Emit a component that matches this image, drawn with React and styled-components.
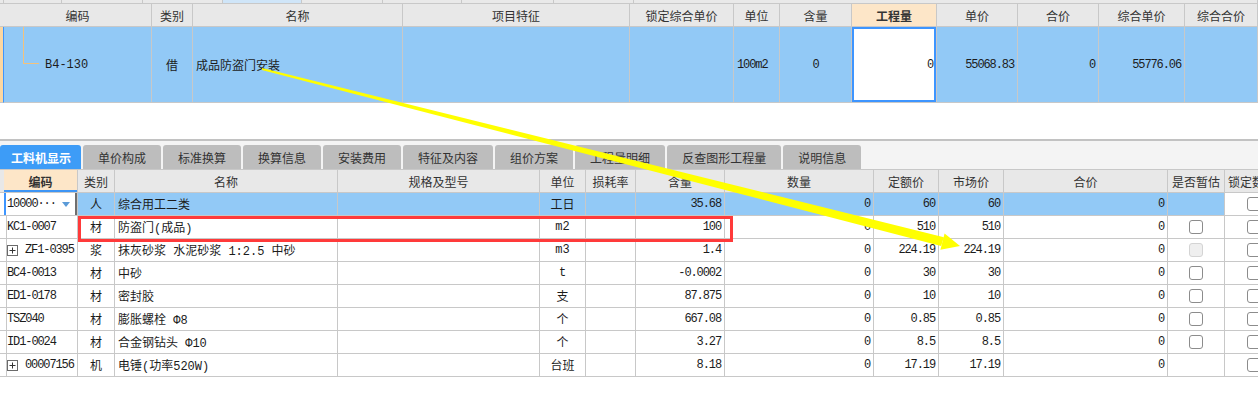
import React from "react";
import styled, { createGlobalStyle } from "styled-components";

const GlobalStyle = createGlobalStyle`
  body {
    margin: 0;
    background: #fff;
    font-family: "Noto Sans CJK SC", sans-serif;
  }
`;

const CJK = `"Noto Sans CJK SC", sans-serif`;
const MIXED = `"Liberation Mono", "Noto Sans CJK SC", monospace`;

const Page = styled.div`
  position: relative;
  width: 1258px;
  height: 420px;
  overflow: hidden;
  background: #fff;
`;

const Strip = styled.div`
  display: flex;
  height: 4px;
  box-sizing: border-box;
  border-bottom: 1px solid #c8c8c8;
`;
const StripCell = styled.div`
  box-sizing: border-box;
  width: ${p => p.$w}px;
  flex: ${p => (p.$w ? "none" : "1")};
  border-right: 1px solid #c8c8c8;
  background: ${p => (p.$hl ? "#cfe5f8" : "#e9e9e9")};
`;

const Grid = styled.div`
  display: grid;
  grid-template-columns: ${p => p.$cols.map(c => `${c}px`).join(" ")};
  grid-template-rows: ${p => p.$rows};
  width: max-content;
`;

const Cell = styled.div`
  position: relative;
  box-sizing: border-box;
  display: flex;
  align-items: center;
  justify-content: ${p =>
    p.$align === "right" ? "flex-end" : p.$align === "center" ? "center" : "flex-start"};
  padding: 0 3px;
  border-right: 1px solid #c8c8c8;
  border-bottom: 1px solid #c8c8c8;
  background: ${p => p.$bg || "transparent"};
  color: #1c1c1c;
  font-family: ${MIXED};
  font-size: 12px;
  letter-spacing: ${p => (p.$num ? "-1.1px" : "normal")};
  white-space: nowrap;
  overflow: hidden;
`;

const HeadCell = styled(Cell)`
  justify-content: ${p => (p.$left ? "flex-start" : "center")};
  background: ${p => (p.$active ? "#fde6c8" : "#e8e8e8")};
  font-family: ${CJK};
  font-weight: ${p => (p.$active ? 700 : 400)};
  color: #333;
  box-shadow: ${p => (p.$underline ? "inset 0 -2px 0 #3d95f5" : "none")};
`;

const EditCell = styled(Cell)`
  background: ${p => (p.$editor ? "#fff" : "transparent")};
  box-shadow: ${p => (p.$editor ? "inset 2px 0 0 #3d95ff, inset -2px 0 0 #6f6f6f" : "none")};
`;

const QtyCell = styled(Cell)`
  background: #fff;
  box-shadow: inset 0 0 0 2px #3d95ff;
`;

const TreeLine = styled.span`
  align-self: flex-start;
  flex: none;
  width: 16px;
  height: 37px;
  margin-left: 16px;
  box-sizing: border-box;
  border-left: 1px solid #f3c27c;
  border-bottom: 1px solid #f3c27c;
`;

const CodeText = styled.span`
  margin-left: ${p => p.$gap || 0}px;
`;

const DropArrow = styled.span`
  margin-left: auto;
  margin-right: 4px;
  width: 0;
  height: 0;
  border-left: 4px solid transparent;
  border-right: 4px solid transparent;
  border-top: 5px solid #5b9bd8;
`;

const ExpandBox = styled.svg`
  flex: none;
  width: 11px;
  height: 11px;
  margin-right: 7px;
`;

const Check = styled.span`
  width: 14px;
  height: 14px;
  box-sizing: border-box;
  border-radius: 3px;
  border: 1px solid ${p => (p.$disabled ? "#d4d4d4" : "#8c8c8c")};
  background: ${p => (p.$disabled ? "#efefef" : "#fff")};
  margin-left: ${p => p.$shift || 0}px;
`;

const TabBar = styled.div`
  display: flex;
  align-items: flex-end;
  gap: 2px;
  height: 31px;
  margin-top: 36px;
  box-sizing: border-box;
  border-top: 2px solid #c2c2c2;
  border-bottom: 1px solid #c8c8c8;
  background: #f4f4f4;
`;

const Tab = styled.div`
  height: 24px;
  display: flex;
  align-items: center;
  padding: ${p => (p.$active ? "0 10px 0 11px" : "0 15px")};
  border-radius: 3px 3px 0 0;
  background: ${p => (p.$active ? "#3d9cf7" : "#bdbdbd")};
  color: ${p => (p.$active ? "#fff" : "#333")};
  font-family: ${CJK};
  font-size: 12px;
  font-weight: ${p => (p.$active ? 700 : 400)};
`;

const Overlay = styled.svg`
  position: absolute;
  left: 0;
  top: 0;
  pointer-events: none;
`;

const RedFrame = styled.div`
  position: absolute;
  left: 78px;
  top: 216px;
  width: 655px;
  height: 26px;
  box-sizing: border-box;
  border: 3px solid #ff3a3a;
`;

const SEL = "#92c9f6";

const stripCols = [4, 58, 81, 80, 79, 81, 79, 92, 80, 0];
const topCols = [4, 148, 41, 210, 227, 104, 46, 72, 85, 81, 81, 86, 73];
const topHeads = ["", "编码", "类别", "名称", "项目特征", "锁定综合单价", "单位", "含量", "工程量", "单价", "合价", "综合单价", "综合合价"];

const botCols = [4, 74, 37, 223, 202, 46, 50, 89, 149, 65, 65, 164, 57, 58];
const botHeads = ["", "编码", "类别", "名称", "规格及型号", "单位", "损耗率", "含量", "数量", "定额价", "市场价", "合价", "是否暂估", "锁定数量"];

const tabs = ["工料机显示", "单价构成", "标准换算", "换算信息", "安装费用", "特征及内容", "组价方案", "工程量明细", "反查图形工程量", "说明信息"];

const rows = [
  { code: "10000···", editor: true, type: "人", name: "综合用工二类", unit: "工日", qty: "35.68", quota: "60", market: "60", est: null, sel: true },
  { code: "KC1-0007", type: "材", name: "防盗门(成品)", unit: "m2", qty: "100", quota: "510", market: "510", est: "on" },
  { code: "ZF1-0395", expand: true, type: "浆", name: "抹灰砂浆 水泥砂浆 1:2.5 中砂", unit: "m3", qty: "1.4", quota: "224.19", market: "224.19", est: "off" },
  { code: "BC4-0013", type: "材", name: "中砂", unit: "t", qty: "-0.0002", quota: "30", market: "30", est: "on" },
  { code: "ED1-0178", type: "材", name: "密封胶", unit: "支", qty: "87.875", quota: "10", market: "10", est: "on" },
  { code: "TSZ040", type: "材", name: "膨胀螺栓 Φ8", unit: "个", qty: "667.08", quota: "0.85", market: "0.85", est: "on" },
  { code: "ID1-0024", type: "材", name: "合金钢钻头 Φ10", unit: "个", qty: "3.27", quota: "8.5", market: "8.5", est: "on" },
  { code: "00007156", expand: true, type: "机", name: "电锤(功率520W)", unit: "台班", qty: "8.18", quota: "17.19", market: "17.19", est: null },
];

const PlusIcon = () => (
  <ExpandBox viewBox="0 0 11 11">
    <rect x="0.5" y="0.5" width="10" height="10" fill="#fff" stroke="#6a6a6a" />
    <path d="M2.5 5.5h6M5.5 2.5v6" stroke="#333" strokeWidth="1" />
  </ExpandBox>
);

const TopTable = () => (
  <>
    <Strip>
      {stripCols.map((w, i) => (
        <StripCell key={i} $w={w} $hl={i === 4} />
      ))}
    </Strip>
    <Grid $cols={topCols} $rows="23px 76px">
      {topHeads.map((h, i) => (
        <HeadCell key={h + i} $active={i === 8}>{h}</HeadCell>
      ))}
      <Cell $bg="#fbd7a2" style={{ borderRight: "1px solid #3d95ff", padding: 0 }} />
      <Cell $bg={SEL}>
        <TreeLine />
        <CodeText $gap={6}>B4-130</CodeText>
      </Cell>
      <Cell $bg={SEL} $align="center">借</Cell>
      <Cell $bg={SEL}>成品防盗门安装</Cell>
      <Cell $bg={SEL} />
      <Cell $bg={SEL} />
      <Cell $bg={SEL} $num>100m2</Cell>
      <Cell $bg={SEL} $align="center" $num>0</Cell>
      <QtyCell $align="right" $num>0</QtyCell>
      <Cell $bg={SEL} $align="right" $num>55068.83</Cell>
      <Cell $bg={SEL} $align="right" $num>0</Cell>
      <Cell $bg={SEL} $align="right" $num>55776.06</Cell>
      <Cell $bg={SEL} />
    </Grid>
  </>
);

const BottomTable = () => (
  <Grid $cols={botCols} $rows={`23px repeat(${rows.length}, 23px)`}>
    {botHeads.map((h, i) => (
      <HeadCell key={h + i} $active={i === 1} $underline={i === 1} $left={i === 13}>{h}</HeadCell>
    ))}
    {rows.map(r => {
      const bg = r.sel ? SEL : undefined;
      return (
        <React.Fragment key={r.code}>
          <Cell />
          <EditCell $editor={r.editor} $num>
            {r.expand && <PlusIcon />}
            <CodeText>{r.code}</CodeText>
            {r.editor && <DropArrow />}
          </EditCell>
          <Cell $bg={bg} $align="center">{r.type}</Cell>
          <Cell $bg={bg}>{r.name}</Cell>
          <Cell $bg={bg} />
          <Cell $bg={bg} $align="center">{r.unit}</Cell>
          <Cell $bg={bg} />
          <Cell $bg={bg} $align="right" $num>{r.qty}</Cell>
          <Cell $bg={bg} $align="right" $num>0</Cell>
          <Cell $bg={bg} $align="right" $num>{r.quota}</Cell>
          <Cell $bg={bg} $align="right" $num>{r.market}</Cell>
          <Cell $bg={bg} $align="right" $num>0</Cell>
          <Cell $bg={bg} $align="center">
            {r.est && <Check $disabled={r.est === "off"} />}
          </Cell>
          <Cell>
            <Check $shift={19} />
          </Cell>
        </React.Fragment>
      );
    })}
  </Grid>
);

const App = () => (
  <Page>
    <GlobalStyle />
    <TopTable />
    <TabBar>
      {tabs.map((t, i) => (
        <Tab key={t} $active={i === 0}>{t}</Tab>
      ))}
    </TabBar>
    <BottomTable />
    <RedFrame />
    <Overlay width="1258" height="420" viewBox="0 0 1258 420">
      <polygon
        points="262.2,68 943.9,237.2 941.1,245.9 261.8,70"
        fill="#ffff00"
      />
      <polygon points="944.6,233.4 960,246 940.4,249.8" fill="#ffff00" />
    </Overlay>
  </Page>
);

export default App;
